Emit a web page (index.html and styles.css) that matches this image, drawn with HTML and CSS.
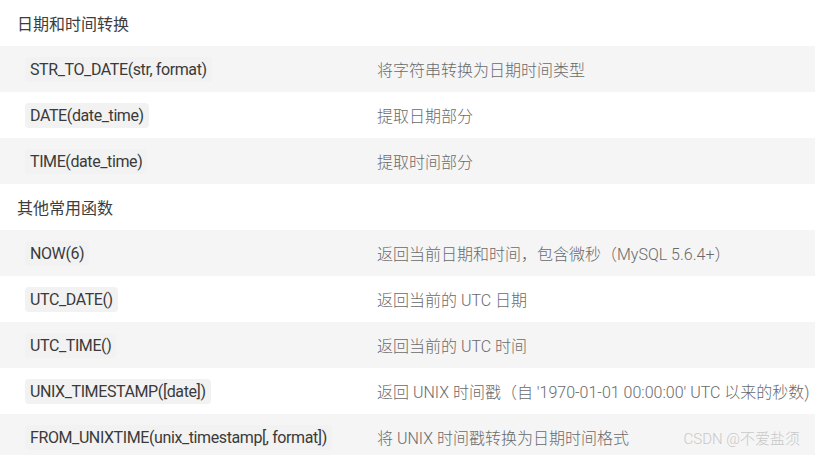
FILE: index.html
```html
<!DOCTYPE html>
<html lang="zh-CN">
<head>
<meta charset="utf-8">
<link rel="stylesheet" href="styles.css">
</head>
<body>
<div class="table">
  <div class="section">日期和时间转换</div>
  <div class="row alt"><div class="fn"><code>STR_TO_DATE(str, format)</code></div><div class="desc">将字符串转换为日期时间类型</div></div>
  <div class="row"><div class="fn"><code>DATE(date_time)</code></div><div class="desc">提取日期部分</div></div>
  <div class="row alt"><div class="fn"><code>TIME(date_time)</code></div><div class="desc">提取时间部分</div></div>
  <div class="section">其他常用函数</div>
  <div class="row alt"><div class="fn"><code>NOW(6)</code></div><div class="desc">返回当前日期和时间，包含微秒（MySQL 5.6.4+）</div></div>
  <div class="row"><div class="fn"><code>UTC_DATE()</code></div><div class="desc">返回当前的 UTC 日期</div></div>
  <div class="row alt"><div class="fn"><code>UTC_TIME()</code></div><div class="desc">返回当前的 UTC 时间</div></div>
  <div class="row"><div class="fn"><code>UNIX_TIMESTAMP([date])</code></div><div class="desc">返回 UNIX 时间戳（自 '1970-01-01 00:00:00' UTC 以来的秒数)</div></div>
  <div class="row alt"><div class="fn"><code>FROM_UNIXTIME(unix_timestamp[, format])</code></div><div class="desc">将 UNIX 时间戳转换为日期时间格式</div></div>
</div>
<div class="watermark">CSDN @不爱盐须</div>
</body>
</html>
```
FILE: styles.css
```css
html, body {
  margin: 0;
  padding: 0;
  background: #ffffff;
}
body {
  width: 815px;
  height: 455px;
  overflow: hidden;
  position: relative;
  font-family: "Roboto", "Noto Sans CJK SC", sans-serif;
  font-size: 16px;
  font-weight: 400;
  color: #4d4d4d;
}
.section {
  height: 46px;
  display: flex;
  align-items: center;
  padding-left: 17px;
  font-weight: 400;
  color: #3d3d3d;
}
.row {
  height: 46px;
  display: grid;
  grid-template-columns: 352px 1fr;
  align-items: center;
  padding-left: 25px;
}
.row.alt {
  background: #f5f5f5;
}
.fn code {
  font-family: inherit;
  font-size: 16px;
  letter-spacing: -0.4px;
  color: #3a3a3a;
  background: #f2f2f2;
  border-radius: 4px;
  padding: 3px 5px;
  white-space: nowrap;
}
.desc {
  color: #6a6a6a;
  font-weight: 300;
  white-space: nowrap;
}
.watermark {
  position: absolute;
  right: 15px;
  bottom: 7px;
  font-size: 15px;
  font-weight: 300;
  color: #c8c8c8;
}
```
